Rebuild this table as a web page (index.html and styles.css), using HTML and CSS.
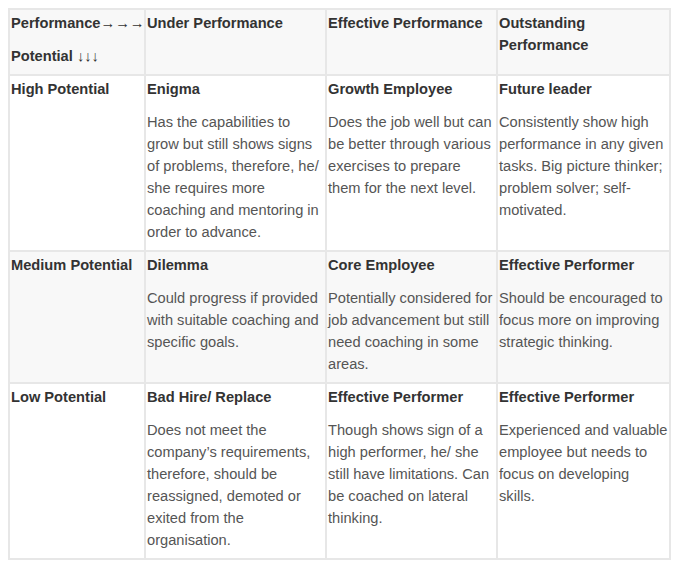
FILE: index.html
```html
<!DOCTYPE html>
<html>
<head>
<meta charset="utf-8">
<link rel="stylesheet" href="styles.css">
</head>
<body>
<table class="matrix">
  <colgroup>
    <col class="c1"><col class="c2"><col class="c3"><col class="c4">
  </colgroup>
  <tr class="shade">
    <td><p class="t">Performance→→→</p><p class="t">Potential ↓↓↓</p></td>
    <td><p class="t">Under Performance</p></td>
    <td><p class="t">Effective Performance</p></td>
    <td><p class="t">Outstanding Performance</p></td>
  </tr>
  <tr>
    <td><p class="t">High Potential</p></td>
    <td><p class="t">Enigma</p><p>Has the capabilities to grow but still shows signs of problems, therefore, he/ she requires more coaching and mentoring in order to advance.</p></td>
    <td><p class="t">Growth Employee</p><p>Does the job well but can be better through various exercises to prepare them for the next level.</p></td>
    <td><p class="t">Future leader</p><p>Consistently show high performance in any given tasks. Big picture thinker; problem solver; self-motivated.</p></td>
  </tr>
  <tr class="shade">
    <td><p class="t">Medium Potential</p></td>
    <td><p class="t">Dilemma</p><p>Could progress if provided with suitable coaching and specific goals.</p></td>
    <td><p class="t">Core Employee</p><p>Potentially considered for job advancement but still need coaching in some areas.</p></td>
    <td><p class="t">Effective Performer</p><p>Should be encouraged to focus more on improving strategic thinking.</p></td>
  </tr>
  <tr>
    <td><p class="t">Low Potential</p></td>
    <td><p class="t">Bad Hire/ Replace</p><p>Does not meet the company’s requirements, therefore, should be reassigned, demoted or exited from the organisation.</p></td>
    <td><p class="t">Effective Performer</p><p>Though shows sign of a high performer, he/ she still have limitations. Can be coached on lateral thinking.</p></td>
    <td><p class="t">Effective Performer</p><p>Experienced and valuable employee but needs to focus on developing skills.</p></td>
  </tr>
</table>
</body>
</html>
```

FILE: styles.css
```css
html, body {
  margin: 0;
  padding: 0;
  background: #ffffff;
}
body {
  padding: 8px;
  font-family: "Liberation Sans", Arial, sans-serif;
  font-size: 14.65px;
  line-height: 22px;
  color: #555555;
}
.matrix {
  border-collapse: collapse;
  table-layout: fixed;
  width: 661px;
}
.c1 { width: 136px; }
.c2 { width: 181px; }
.c3 { width: 171px; }
.c4 { width: 173px; }
.matrix td {
  border: 2px solid #e7e7e7;
  vertical-align: top;
  padding: 2px 0 7px 1px;
}
.shade td {
  background: #f8f8f8;
}
.matrix p {
  margin: 0;
}
.matrix p + p {
  margin-top: 11px;
}
.matrix p.t {
  font-weight: bold;
  color: #333333;
}
```
